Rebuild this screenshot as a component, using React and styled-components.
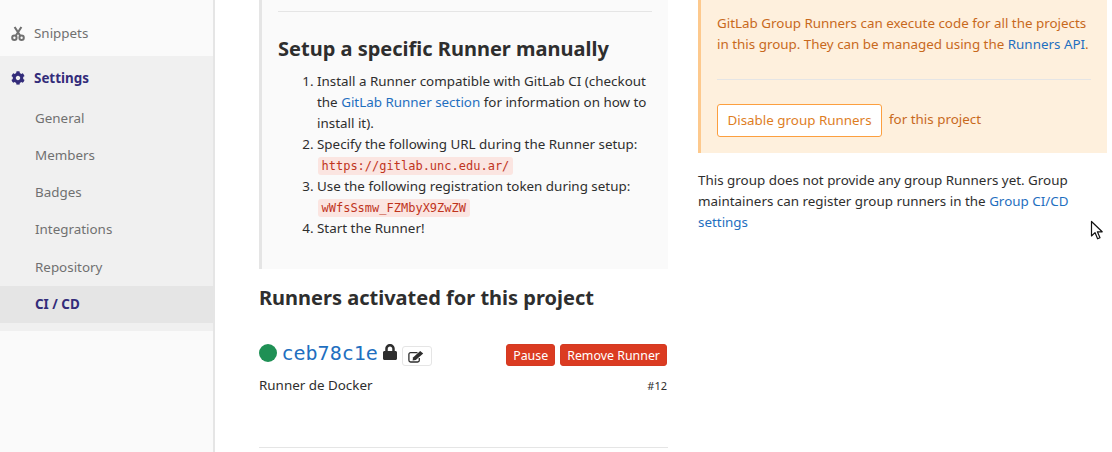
import React from "react";
import styled, { createGlobalStyle } from "styled-components";
import { FaLock, FaCog } from "react-icons/fa";

const Global = createGlobalStyle`
  html, body { margin: 0; padding: 0; background: #fff; }
  body { font-family: "Noto Sans", sans-serif; font-size: 14px; color: #2e2e2e; }
`;
const Page = styled.div`
  display: flex; width: 1112px; height: 452px; overflow: hidden; position: relative;
`;
const Sidebar = styled.nav`
  width: 213px; flex: none; background: #fafafa; border-right: 2px solid #e5e5e5;
  padding-top: 14px;
`;
const TopItem = styled.div`
  display: flex; align-items: center; height: ${p => p.$h}px; padding-left: 11px; gap: 9px;
  color: ${p => (p.$active ? "#332c7a" : "#707070")};
  font-weight: ${p => (p.$active ? 700 : 400)};
  font-size: 13.4px;
`;
const IconSlot = styled.span`
  width: 14px; height: 14px; display: flex; align-items: center; justify-content: center; flex: none;
`;
const Group = styled.div`
  margin-top: 4px; background: #f0f0f0; padding-bottom: 8px;
`;
const SubItem = styled.div`
  height: 37.2px; display: flex; align-items: center; padding: 0 0 1.5px 35px; box-sizing: border-box; font-size: 13.4px;
  color: ${p => (p.$active ? "#332c7a" : "#707070")};
  font-weight: ${p => (p.$active ? 700 : 400)};
  background: ${p => (p.$active ? "#e5e5e5" : "transparent")};
`;
const Main = styled.main`
  flex: none; width: 897px; display: flex; gap: 30px; padding-left: 44px; box-sizing: border-box;
`;
const LeftCol = styled.section`
  width: 409px; flex: none;
`;
const RightCol = styled.section`
  width: 409px; flex: none;
`;
const Panel = styled.div`
  background: #fafafa; border-left: 3px solid #e5e5e5; height: 269px; padding: 11px 16px 0 16px; box-sizing: border-box;
`;
const Rule = styled.hr`
  border: 0; border-top: 1px solid #e5e5e5; margin: 0;
`;
const SetupTitle = styled.h3`
  margin: 23px 0 8px; font-size: 20px; line-height: 28px; font-weight: 700; color: #2e2e2e;
`;
const Steps = styled.ol`
  margin: 0; padding-left: 39px; font-size: 13.4px; line-height: 21px;
`;
const Link = styled.a`
  color: #1f6fc0; text-decoration: none;
`;
const Code = styled.code`
  font-family: "DejaVu Sans Mono", monospace; font-size: 12px; line-height: 18px;
  background: #fbe5e1; color: #c0341d; border-radius: 3px; padding: 0 3.5px; margin-left: 1px; display: inline-block;
`;
const RunnersTitle = styled.h4`
  margin: 15px 0 0; font-size: 20px; line-height: 28px; font-weight: 700; color: #2e2e2e;
`;
const RunnerRow = styled.div`
  display: flex; align-items: center; margin-top: 30px; height: 26px;
`;
const Dot = styled.span`
  width: 18px; height: 18px; border-radius: 50%; background: #1f9055; flex: none; margin: 0 5px 5px -0.5px;
`;
const RunnerId = styled.a`
  font-family: "DejaVu Sans Mono", monospace; font-size: 20px; color: #1f6fc0; text-decoration: none; margin: 0 4px 4px 0;
`;
const LockWrap = styled.span`
  display: flex; color: #2e2e2e; margin: 0 4px 6px 0;
`;
const EditButton = styled.button`
  width: 30px; height: 20px; padding: 0; display: flex; align-items: center; justify-content: center;
  background: #fff; border: 1px solid #e5e5e5; border-radius: 3px; color: #2e2e2e; margin-top: 2px;
`;
const Actions = styled.div`
  margin: 0 1px 0 auto; display: flex; gap: 5px;
`;
const DangerButton = styled.button`
  height: 22px; padding: 0 6px; background: #db3b21; color: #fff; border: 1px solid #d43a22; border-radius: 3px;
  font: 400 12.4px "Noto Sans", sans-serif;
`;
const RunnerMeta = styled.div`
  display: flex; justify-content: space-between; align-items: center; margin: 7px 1px 0 0; height: 20px; font-size: 13.4px;
`;
const RunnerNum = styled.small`
  font-size: 11px; color: #2e2e2e;
`;
const BottomRule = styled.hr`
  border: 0; border-top: 1px solid #e5e5e5; margin: 52px 0 0;
`;
const Warning = styled.div`
  background: #fef0dd; border-left: 3px solid #fdc98d; height: 153px; padding: 13px 16px 0 16px; box-sizing: border-box;
  color: #c8691c; font-size: 13.4px; line-height: 21px;
`;
const WarnRule = styled.hr`
  border: 0; border-top: 1px solid #e5e5e5; margin: 24px 0 24px;
`;
const WarnRow = styled.div`
  display: flex; align-items: center; gap: 7px;
`;
const WarnNote = styled.span`
  margin-bottom: 2px;
`;
const OutlineButton = styled.button`
  height: 33px; width: 165px; padding: 0 0 2px; background: #fff; border: 1px solid #fc9f3f; border-radius: 3px;
  color: #de7e1f; font: 400 13.4px "Noto Sans", sans-serif;
`;
const GroupNote = styled.p`
  margin: 17px 0 0; width: 380px; font-size: 13.4px; line-height: 21px; color: #2e2e2e;
`;
const Cursor = styled.svg`
  position: absolute; left: 1090px; top: 220px;
`;

const ScissorsIcon = () => (
  <svg width="14" height="15" viewBox="0 0 14 15" fill="none" stroke="#707070">
    <circle cx="3.4" cy="11.8" r="2.2" strokeWidth="2" />
    <circle cx="10.6" cy="11.8" r="2.2" strokeWidth="2" />
    <path d="M4.6 10 L10.4 1 M9.4 10 L3.6 1" strokeWidth="2.1" />
  </svg>
);

const PencilSquare = () => (
  <svg width="17" height="13" viewBox="0 0 17 13" fill="none">
    <path d="M9.5 2.6 H2.6 A1.7 1.7 0 0 0 0.9 4.3 V10.3 A1.7 1.7 0 0 0 2.6 12 H9.6 A1.7 1.7 0 0 0 11.3 10.3 V8" stroke="#2e2e2e" strokeWidth="1.3" />
    <path d="M5 7.4 L12.2 0.9 L15.2 3.5 L7.8 10 L4.6 10.4 Z" fill="#2e2e2e" />
  </svg>
);

export default function App() {
  return (
    <Page>
      <Global />
      <Sidebar>
        <TopItem $h={38}><IconSlot><ScissorsIcon /></IconSlot>Snippets</TopItem>
        <Group>
          <TopItem $active $h={44}><IconSlot><FaCog size={14} color="#332c7a" /></IconSlot>Settings</TopItem>
          <SubItem>General</SubItem>
          <SubItem>Members</SubItem>
          <SubItem>Badges</SubItem>
          <SubItem>Integrations</SubItem>
          <SubItem>Repository</SubItem>
          <SubItem $active>CI / CD</SubItem>
        </Group>
      </Sidebar>
      <Main>
        <LeftCol>
          <Panel>
            <Rule />
            <SetupTitle>Setup a specific Runner manually</SetupTitle>
            <Steps>
              <li>Install a Runner compatible with GitLab CI (checkout the <Link>GitLab Runner section</Link> for information on how to install it).</li>
              <li>Specify the following URL during the Runner setup: <Code>https://gitlab.unc.edu.ar/</Code></li>
              <li>Use the following registration token during setup: <Code>wWfsSsmw_FZMbyX9ZwZW</Code></li>
              <li>Start the Runner!</li>
            </Steps>
          </Panel>
          <RunnersTitle>Runners activated for this project</RunnersTitle>
          <RunnerRow>
            <Dot />
            <RunnerId>ceb78c1e</RunnerId>
            <LockWrap><FaLock size={16} /></LockWrap>
            <EditButton><PencilSquare /></EditButton>
            <Actions>
              <DangerButton>Pause</DangerButton>
              <DangerButton>Remove Runner</DangerButton>
            </Actions>
          </RunnerRow>
          <RunnerMeta>
            <span>Runner de Docker</span>
            <RunnerNum>#12</RunnerNum>
          </RunnerMeta>
          <BottomRule />
        </LeftCol>
        <RightCol>
          <Warning>
            GitLab Group Runners can execute code for all the projects in this group. They can be managed using the <Link>Runners API</Link>.
            <WarnRule />
            <WarnRow>
              <OutlineButton>Disable group Runners</OutlineButton>
              <WarnNote>for this project</WarnNote>
            </WarnRow>
          </Warning>
          <GroupNote>
            This group does not provide any group Runners yet. Group maintainers can register group runners in the <Link>Group CI/CD settings</Link>
          </GroupNote>
        </RightCol>
      </Main>
      <Cursor width="14" height="22" viewBox="0 0 14 22">
        <path d="M1.5 1.5 V16 L5 12.6 L7.6 18.8 L10 17.8 L7.4 11.8 H12.2 Z" fill="#fff" stroke="#111" strokeWidth="1.2" strokeLinejoin="round" />
      </Cursor>
    </Page>
  );
}
